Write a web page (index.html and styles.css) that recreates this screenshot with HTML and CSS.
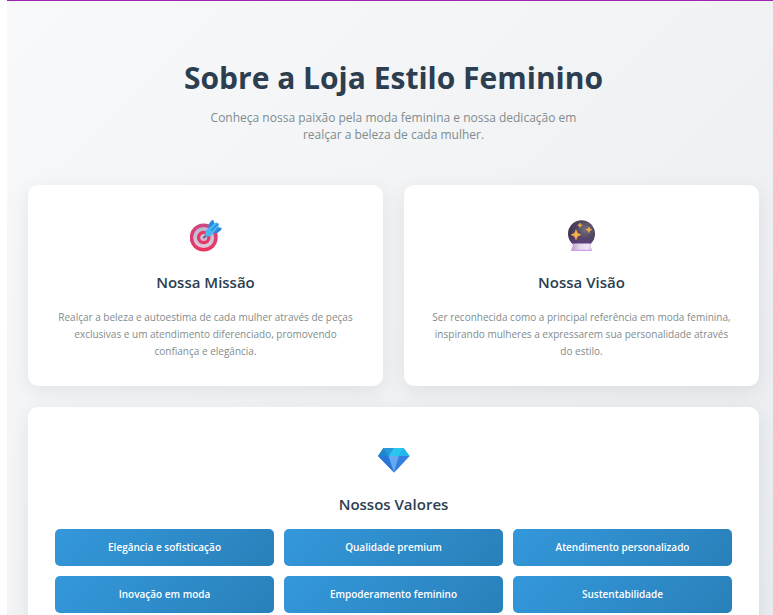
FILE: index.html
```html
<!DOCTYPE html>
<html lang="pt-BR">
<head>
<meta charset="utf-8">
<meta name="viewport" content="width=device-width, initial-scale=1">
<title>Sobre a Loja Estilo Feminino</title>
<link rel="stylesheet" href="styles.css">
</head>
<body>
<main class="about">
  <header class="intro">
    <h1 class="intro-title">Sobre a Loja Estilo Feminino</h1>
    <p class="intro-text">Conheça nossa paixão pela moda feminina e nossa dedicação em realçar a beleza de cada mulher.</p>
  </header>
  <div class="cards">
    <section class="card">
      <svg class="icon" viewBox="0 0 32 32" aria-hidden="true">
        <defs>
          <linearGradient id="ring" x2="0" y2="1"><stop stop-color="#c94b80"/><stop offset="1" stop-color="#ee315f"/></linearGradient>
          <linearGradient id="pale" x2="0" y2="1"><stop stop-color="#bcb5d2"/><stop offset="1" stop-color="#dfc8dd"/></linearGradient>
        </defs>
        <circle cx="13.700" cy="17.500" r="14" fill="url(#ring)"/>
        <circle cx="13.700" cy="17.500" r="10.500" fill="url(#pale)"/>
        <circle cx="13.700" cy="17.500" r="6.800" fill="#e63865"/>
        <circle cx="13.700" cy="17.500" r="3.500" fill="#cbbad5"/>
        <path d="M14 17.500 18 13.500" stroke="#65548a" stroke-width="1.800" stroke-linecap="round"/>
        <path d="M18.500 8V4.500L21.500.5Q22.600-.8 23.500.6L25 5l-4 5.500zM23.500 13l3.500-6 4 .8q1.300.7.3 2L27.500 13z" fill="#2788df"/>
        <path d="M15.800 16q-1.800-4.500 1.700-7L25 3q2-1.300 3.500.3 1.200 1.600-.2 3.500L22.500 14.200Q19.500 17.500 15.800 16z" fill="#48b8f1"/>
        <path d="m21.500 10.300 5.800-5.800" stroke="#2788df" stroke-width="1.500" stroke-linecap="round"/>
      </svg>
      <h2 class="card-title">Nossa Missão</h2>
      <p class="card-text">Realçar a beleza e autoestima de cada mulher através de peças exclusivas e um atendimento diferenciado, promovendo confiança e elegância.</p>
    </section>
    <section class="card">
      <svg class="icon" viewBox="0 0 32 32" aria-hidden="true">
        <defs>
          <radialGradient id="ball" cx=".65" cy=".35" r=".65"><stop stop-color="#77717f"/><stop offset=".5" stop-color="#504860"/><stop offset="1" stop-color="#40334d"/></radialGradient>
          <linearGradient id="glow" x2="0" y2="1"><stop offset=".5" stop-color="#67418a" stop-opacity="0"/><stop offset="1" stop-color="#67418a"/></linearGradient>
          <linearGradient id="stand" x2="1"><stop stop-color="#b89bc6"/><stop offset=".4" stop-color="#e3d8eb"/><stop offset=".8" stop-color="#f0e5f5"/><stop offset="1" stop-color="#d2b6df"/></linearGradient>
        </defs>
        <circle cx="15.500" cy="13.800" r="13.500" fill="url(#ball)"/>
        <circle cx="15.500" cy="13.800" r="13.500" fill="url(#glow)"/>
        <path d="M7 23.500h17.300q.2 3.200 1.700 6.200 0 1.300-1.300 1.300H6.300Q5 31 5.200 29.700 6.800 27 7 23.500z" fill="url(#stand)"/>
        <path d="M5.200 29.700h20.800q0 1.300-1.300 1.300H6.300q-1 0-1.100-1.300z" fill="#d39de9"/>
        <path d="m10 9.800 1.500 3.500 3.400 1.500-3.400 1.500L10 19.800l-1.500-3.500-3.400-1.500 3.400-1.500zM23 6.800l.8 2 2 .9-2 .8-.8 2.200-.9-2.200-2.100-.8 2.100-.9zM14 3l.7 1.500 1.600.7-1.600.7-.7 1.600-.7-1.600-1.600-.7 1.600-.7z" fill="#f8b04d" stroke="#f8b04d" stroke-width=".5" stroke-linejoin="round"/>
      </svg>
      <h2 class="card-title">Nossa Visão</h2>
      <p class="card-text">Ser reconhecida como a principal referência em moda feminina, inspirando mulheres a expressarem sua personalidade através do estilo.</p>
    </section>
    <section class="card card-wide">
      <svg class="icon" viewBox="0 0 32 32" aria-hidden="true">
        <path d="M5.500 6h20l6 8L16 30.500 0 14z" fill="#2f86e2"/>
        <path d="M5.500 6H15.500L10.500 14H0z" fill="#1b87cf"/>
        <path d="M15.500 6h10L21 14H10.500z" fill="#2bc6ef"/>
        <path d="M5.500 6h10L10.500 14z" fill="#2799db"/>
        <path d="m25.500 6 6 8H21z" fill="#20b9ec"/>
        <path d="M0 14h10.500L16 30.500z" fill="#2876da"/>
        <path d="M10.500 14H21L16 30.500z" fill="#66a9f1"/>
        <path d="M21 14h10.500L16 30.500z" fill="#3580df"/>
      </svg>
      <h2 class="card-title">Nossos Valores</h2>
      <ul class="values">
        <li class="value">Elegância e sofisticação</li>
        <li class="value">Qualidade premium</li>
        <li class="value">Atendimento personalizado</li>
        <li class="value">Inovação em moda</li>
        <li class="value">Empoderamento feminino</li>
        <li class="value">Sustentabilidade</li>
      </ul>
    </section>
  </div>
</main>
</body>
</html>
```
FILE: styles.css
```css
* {
  box-sizing: border-box;
  margin: 0;
  padding: 0;
}

html {
  scrollbar-width: none;
}

body {
  padding-left: 7px;
  background: #fff;
  color: #7f8c8d;
  font-family: "Segoe UI", "Open Sans", "Noto Sans", sans-serif;
}

.about {
  padding: 53px 14px 54px 21px;
  border-top: 1px solid #9c27b0;
  background: linear-gradient(135deg, #f8f9fa, #e9ecef);
}

.intro {
  margin-bottom: 42px;
  text-align: center;
}

.intro-title {
  margin-bottom: 7px;
  color: #2c3e50;
  font-size: 30px;
  font-weight: 700;
  line-height: 48px;
}

.intro-text {
  max-width: 400px;
  margin: 0 auto;
  font-size: 12px;
  line-height: 17px;
}

.cards {
  display: grid;
  grid-template-columns: 1fr 1fr;
  gap: 21px;
}

.card {
  padding: 35px 27px 26px;
  border-radius: 10px;
  background: #fff;
  box-shadow: 0 5px 20px rgba(0, 0, 0, 0.08);
  text-align: center;
}

.card-wide {
  grid-column: 1 / -1;
}

.icon {
  display: block;
  width: 32px;
  height: 32px;
  margin: 0 auto 18px;
}

.card-title {
  margin-bottom: 15px;
  color: #2c3e50;
  font-size: 15px;
  font-weight: 600;
  line-height: 24px;
}

.card-wide .card-title {
  margin-bottom: 13px;
}

.card-text {
  font-size: 10px;
  line-height: 17px;
}

.values {
  display: grid;
  grid-template-columns: repeat(3, 1fr);
  gap: 10px;
  list-style: none;
}

.value {
  padding: 10px;
  border-radius: 5px;
  background: linear-gradient(135deg, #3498db, #2980b9);
  color: #fff;
  font-size: 10px;
  font-weight: 600;
  line-height: 17px;
}
```
